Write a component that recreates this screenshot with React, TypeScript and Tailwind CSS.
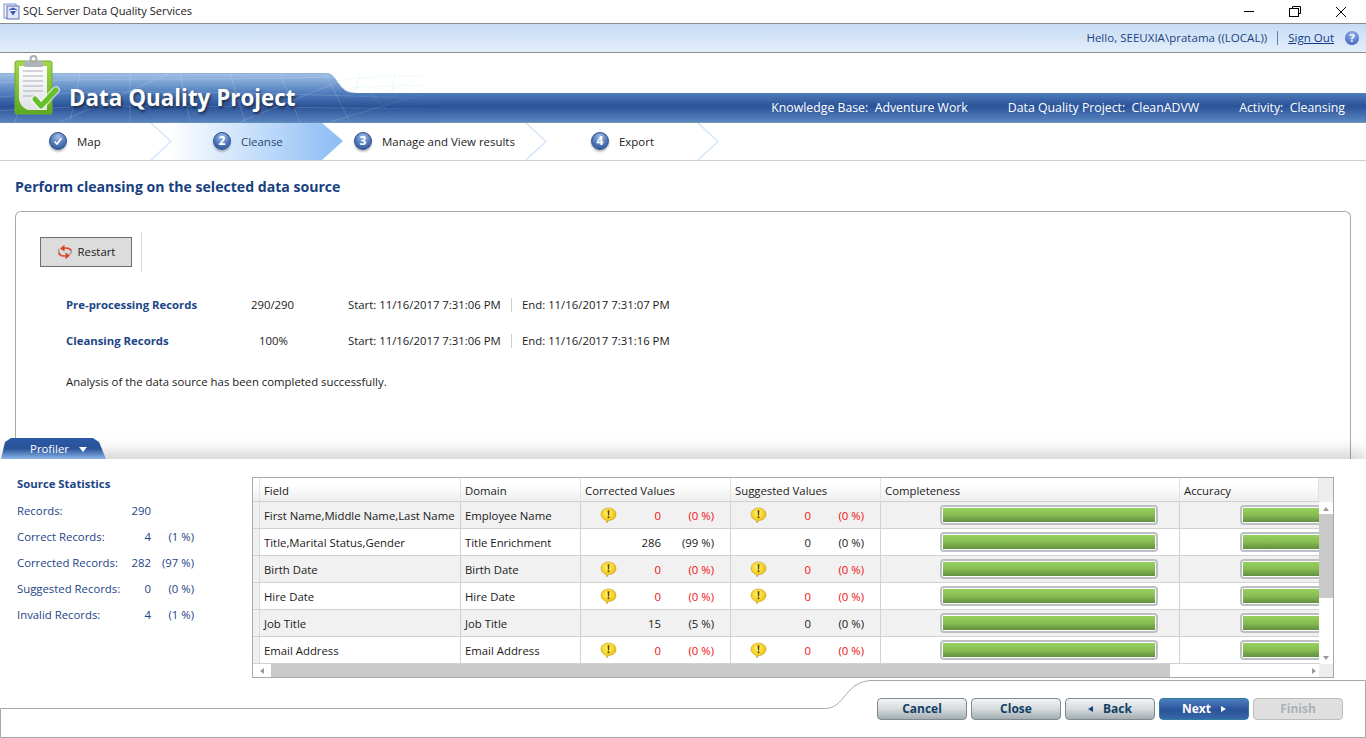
import React from "react";

const rows = [
  { f: "First Name,Middle Name,Last Name", d: "Employee Name", c: "0", cp: "(0 %)", cw: true, s: "0", sp: "(0 %)", sw: true },
  { f: "Title,Marital Status,Gender", d: "Title Enrichment", c: "286", cp: "(99 %)", cw: false, s: "0", sp: "(0 %)", sw: false },
  { f: "Birth Date", d: "Birth Date", c: "0", cp: "(0 %)", cw: true, s: "0", sp: "(0 %)", sw: true },
  { f: "Hire Date", d: "Hire Date", c: "0", cp: "(0 %)", cw: true, s: "0", sp: "(0 %)", sw: true },
  { f: "Job Title", d: "Job Title", c: "15", cp: "(5 %)", cw: false, s: "0", sp: "(0 %)", sw: false },
  { f: "Email Address", d: "Email Address", c: "0", cp: "(0 %)", cw: true, s: "0", sp: "(0 %)", sw: true },
];

const stats = [
  { l: "Records:", v: "290", p: "" },
  { l: "Correct Records:", v: "4", p: "(1 %)" },
  { l: "Corrected Records:", v: "282", p: "(97 %)" },
  { l: "Suggested Records:", v: "0", p: "(0 %)" },
  { l: "Invalid Records:", v: "4", p: "(1 %)" },
];

function Warn() {
  return (
    <svg width="17" height="18" viewBox="0 0 17 18" className="shrink-0">
      <defs>
        <radialGradient id="wg" cx="0.45" cy="0.35" r="0.7">
          <stop offset="0" stopColor="#fff27a" />
          <stop offset="0.6" stopColor="#f5cf1c" />
          <stop offset="1" stopColor="#c99a08" />
        </radialGradient>
      </defs>
      <path d="M8.5 1C12.9 1 16 3.8 16 7.3 16 10.8 12.9 13.5 8.5 13.5 L7 16 L6 13.2C3 12.4 1 10.2 1 7.3 1 3.8 4.1 1 8.5 1Z" fill="url(#wg)" stroke="#c8a030" strokeWidth="0.6" />
      <path d="M7.6 3.2h1.8l-.3 5.2h-1.2z" fill="#5a4500" />
      <circle cx="8.5" cy="10.3" r="1" fill="#5a4500" />
    </svg>
  );
}

function StepDot({ children }: { children: React.ReactNode }) {
  return (
    <span className="relative flex h-[18px] w-[18px] shrink-0 items-center justify-center rounded-full border border-[#2b4f8f] bg-[radial-gradient(circle_at_50%_25%,#a9c0e6_0%,#5a82c2_45%,#23488c_100%)] text-[12px] font-bold leading-none text-white shadow-[0_2px_2px_rgba(0,0,0,0.25)]">
      {children}
    </span>
  );
}

function Chevron({ className }: { className: string }) {
  return (
    <svg width="23" height="38" viewBox="0 0 23 38" className={className}>
      <path d="M1 0 L21 18.5 L1 37" fill="none" stroke="#cfe2f8" strokeWidth="1.2" />
    </svg>
  );
}

function Bar({ clipped }: { clipped?: boolean }) {
  return (
    <div className={`flex h-[20px] shrink-0 rounded-[4px] border-[2px] border-[#bcc0c5] bg-white p-[1px] ${clipped ? "w-[100px]" : "w-[218px]"}`}>
      <div className="h-full w-full bg-[linear-gradient(#95d15c,#88bc52_50%,#628f40)]" />
    </div>
  );
}

function Cell({ count, pct, warn }: { count: string; pct: string; warn: boolean }) {
  const color = warn ? "text-[#f01010]" : "text-[#1a1a1a]";
  return (
    <div className={`flex h-full items-center border-r border-[#d2d2d2] pt-[1px] ${color}`}>
      <div className="flex w-[80px] items-center justify-between pl-[19px]">
        {warn ? <span className="leading-none"><Warn /></span> : <span />}
        <span>{count}</span>
      </div>
      <div className="w-[53px] text-right">{pct}</div>
    </div>
  );
}

function FooterButton({ label, kind }: { label: React.ReactNode; kind: "normal" | "primary" | "disabled" }) {
  const k =
    kind === "primary"
      ? "border-[#2f7f9f] bg-[linear-gradient(#4d7fc0,#2a5298_55%,#3a68aa)] text-white"
      : kind === "disabled"
      ? "border-[#bdbdbd] bg-[#dfdfdf] text-[#a9b2ba]"
      : "border-[#7f8a8f] bg-[linear-gradient(#f2f4f5,#d5dadc_50%,#a3adb1)] text-[#123f66]";
  return (
    <div className={`flex h-[22px] w-[90px] items-center justify-center gap-[10px] rounded-[4px] border text-[12px] font-bold ${k}`}>
      {label}
    </div>
  );
}

export default function App() {
  return (
    <div className="relative flex h-[738px] w-[1366px] flex-col overflow-hidden bg-white font-['Open_Sans','Liberation_Sans',sans-serif] text-[11.35px] text-[#1a1a1a]">
      {/* Title bar */}
      <div className="flex h-[24px] shrink-0 items-center border-b border-[#8c8c8c] bg-white pl-[3px]">
        <svg width="17" height="17" viewBox="0 0 17 17" className="mr-[3px]">
          <rect x="1" y="1" width="12" height="14" fill="#eef2fb" stroke="#7a8fd8" />
          <rect x="4" y="3" width="12" height="13" fill="#dfe6f6" stroke="#5a6fb0" />
          <path d="M6 6.5l4-2 4 2-4 6z" fill="#3a56b8" />
          <path d="M7 7.5h6" stroke="#fff" />
        </svg>
        <span className="text-[11.15px]">SQL Server Data Quality Services</span>
        <div className="ml-auto flex items-center pr-[19px] text-black">
          <svg width="12" height="12" viewBox="0 0 12 12" className="mr-[34px]"><path d="M1 5.5h10" stroke="#000" /></svg>
          <svg width="12" height="12" viewBox="0 0 12 12" className="mr-[34px]">
            <path d="M3.5 2.5V.5h8v7h-2" fill="none" stroke="#000" />
            <rect x=".5" y="2.5" width="9" height="8" fill="#fff" stroke="#000" />
          </svg>
          <svg width="12" height="12" viewBox="0 0 12 12"><path d="M1 1l10 10M11 1L1 11" stroke="#000" /></svg>
        </div>
      </div>

      {/* User bar */}
      <div className="flex h-[29px] shrink-0 items-center justify-end border-b border-[#8c8c8c] bg-[linear-gradient(#c6dcf5,#e3eefb)] pr-[6px] text-[11.55px] text-[#22437f]">
        <span>Hello, SEEUXIA\pratama ((LOCAL))</span>
        <span className="mx-[10px] h-[14px] w-px bg-[#5f7fae]" />
        <span className="text-[#103a88] underline">Sign Out</span>
        <svg width="16" height="16" viewBox="0 0 16 16" className="ml-[10px]">
          <defs>
            <radialGradient id="hg" cx="0.5" cy="0.3" r="0.8">
              <stop offset="0" stopColor="#9db8ee" />
              <stop offset="1" stopColor="#2d55b5" />
            </radialGradient>
          </defs>
          <circle cx="8" cy="8" r="7.5" fill="url(#hg)" stroke="#dfe8f8" />
          <text x="8" y="12" textAnchor="middle" fontSize="11" fontWeight="700" fill="#fff" fontFamily="Open Sans">?</text>
        </svg>
      </div>

      {/* Banner */}
      <div className="relative h-[70px] shrink-0 bg-white">
        <div className="absolute bottom-0 left-0 right-0 flex h-[30px] items-center justify-end gap-[40px] border-b border-[#6f9aa8] bg-[linear-gradient(#4f7dbd,#2a5298_45%,#5a86c0)] pr-[21px] pt-[1px] text-[12.3px] text-white">
          <span>Knowledge Base:&nbsp; Adventure Work</span>
          <span>Data Quality Project:&nbsp; CleanADVW</span>
          <span>Activity:&nbsp; Cleansing</span>
        </div>
        <svg width="440" height="50" viewBox="0 0 440 50" className="absolute left-0 top-[20px]">
          <defs>
            <linearGradient id="tb" gradientUnits="userSpaceOnUse" x1="0" y1="0" x2="0" y2="50">
              <stop offset="0" stopColor="#a3c2e8" />
              <stop offset="0.4" stopColor="#4f7dbd" />
              <stop offset="0.67" stopColor="#2a5298" />
              <stop offset="1" stopColor="#5a86c0" />
            </linearGradient>
            <linearGradient id="fade" gradientUnits="userSpaceOnUse" x1="0" y1="0" x2="440" y2="0">
              <stop offset="0.75" stopColor="#ffffff" stopOpacity="0.22" />
              <stop offset="1" stopColor="#ffffff" stopOpacity="0" />
            </linearGradient>
          </defs>
          <g stroke="#d9f2f5" strokeOpacity="0.6" fill="none" strokeWidth="0.7">
            <path d="M335 8C370 2 400 4 425 3M340 16C370 12 400 14 425 12" />
            <path d="M360 0L355 20M395 0L392 20M345 20L385 0M385 20L420 4" />
          </g>
          <path d="M0 49.5V0H326C338 0 337 20 355 20H440V49.5Z" fill="url(#tb)" />
          <path d="M0 0.4H326C338 0.4 337 20 355 20" fill="none" stroke="#7da8b8" strokeWidth="0.6" />
          <g stroke="url(#fade)" fill="none" strokeWidth="0.7">
            <path d="M0 10C80 4 200 8 330 4M0 24C90 16 220 18 440 26M0 38C90 30 220 34 440 36" />
            <path d="M30 0L15 49M80 0L70 49M130 0L130 49M180 0L190 49M230 0L245 49M280 0L300 49M325 0L350 49M370 20L400 49M415 20L430 49" />
            <path d="M240 49L340 8M330 49L420 22M60 49L170 0" />
          </g>
        </svg>
        <svg width="52" height="62" viewBox="0 0 52 62" className="absolute left-[12px] top-[2px]">
          <defs>
            <linearGradient id="pg" x1="0" y1="0" x2="0" y2="1">
              <stop offset="0" stopColor="#ffffff" />
              <stop offset="1" stopColor="#dfe2e6" />
            </linearGradient>
            <linearGradient id="bg" x1="0" y1="0" x2="0" y2="1">
              <stop offset="0" stopColor="#a5d84a" />
              <stop offset="1" stopColor="#5ca81c" />
            </linearGradient>
          </defs>
          <rect x="3" y="6" width="37" height="53" rx="2" fill="url(#bg)" stroke="#6fae28" />
          <path d="M7 11H35V55H16C11 53 8 50 7 44Z" fill="url(#pg)" />
          <path d="M11 16H31M11 21H31M11 26H31M11 31H31M11 36H31M11 41H24" stroke="#a9aeb6" strokeWidth="1.2" />
          <rect x="12" y="6" width="19" height="6" rx="1.5" fill="#b0b4b9" />
          <circle cx="21.5" cy="4" r="3" fill="none" stroke="#a8adb3" strokeWidth="2" />
          <path d="M23 44l6 7 15-16" fill="none" stroke="#ffffff" strokeOpacity="0.6" strokeWidth="8" strokeLinecap="round" strokeLinejoin="round" />
          <path d="M23 44l6 7 15-16" fill="none" stroke="#66c02a" strokeWidth="5" strokeLinecap="round" strokeLinejoin="round" />
        </svg>
        <div className="absolute left-[69px] top-[29px] text-[22.4px] font-bold leading-[32px] text-white [text-shadow:1px_2px_3px_rgba(0,0,0,0.6)]">
          Data Quality Project
        </div>
      </div>

      {/* Wizard */}
      <div className="relative flex h-[38px] shrink-0 border-b border-[#cfcfcf] bg-white text-[11.45px] text-[#222]">
        <div className="absolute left-[150px] top-0 h-[37px] w-[194px] bg-[linear-gradient(90deg,#ffffff_10%,#8abcf5_100%)] [clip-path:polygon(0_0,172px_0,193px_18px,172px_37px,0_37px,21px_18px)]" />
        <Chevron className="absolute left-[150px] top-0" />
        <Chevron className="absolute left-[525px] top-0" />
        <Chevron className="absolute left-[697px] top-0" />
        <div className="absolute left-[49px] top-[9px] flex items-center gap-[10px]">
          <StepDot>
            <svg width="10" height="10" viewBox="0 0 10 10"><path d="M1.5 5.5l2.5 2.5 4.5-6" fill="none" stroke="#fff" strokeWidth="1.6" /></svg>
          </StepDot>
          <span className="pt-[1px]">Map</span>
        </div>
        <div className="absolute left-[213px] top-[9px] flex items-center gap-[10px]">
          <StepDot>2</StepDot>
          <span className="pt-[1px] text-[#28486e]">Cleanse</span>
        </div>
        <div className="absolute left-[354px] top-[9px] flex items-center gap-[10px]">
          <StepDot>3</StepDot>
          <span className="pt-[1px]">Manage and View results</span>
        </div>
        <div className="absolute left-[591px] top-[9px] flex items-center gap-[10px]">
          <StepDot>4</StepDot>
          <span className="pt-[1px]">Export</span>
        </div>
      </div>

      {/* Heading */}
      <div className="flex h-[50px] shrink-0 items-center pl-[15px] pt-[1px] text-[14.1px] font-bold text-[#17407f]">
        Perform cleansing on the selected data source
      </div>

      {/* Main panel */}
      <div className="relative mx-[15px] h-[248px] shrink-0 rounded-t-[6px] border border-b-0 border-[#a8a8a8] pl-[24px] pt-[20px]">
        <div className="flex items-center">
          <div className="flex h-[30px] w-[92px] items-center justify-center gap-[5px] border-[1.5px] border-[#6e6e6e] bg-[#dcdcdc] text-[#1a1a1a]">
            <svg width="16" height="16" viewBox="0 0 16 16">
              <path d="M14.5 7C13 4 10 3.6 6.5 4.2" fill="none" stroke="#e2492a" strokeWidth="1.6" />
              <path d="M7.5 0.8L3 4.5 7.5 7.5z" fill="#d8432a" />
              <path d="M2 5C1.2 7 2 9 3.5 10" fill="none" stroke="#9a9a94" strokeWidth="1.4" />
              <path d="M1.5 9C3 12 6 12.4 9.5 11.8" fill="none" stroke="#e2492a" strokeWidth="1.6" />
              <path d="M8.5 8.5L13 11.6 8.5 15.2z" fill="#d8432a" />
              <path d="M14 6C14.8 8 14 9.5 12.5 10.5" fill="none" stroke="#9a9a94" strokeWidth="1.2" />
            </svg>
            Restart
          </div>
          <span className="ml-[9px] h-[40px] w-px bg-[#dcdcdc]" />
        </div>

        <div className="mt-[15px] flex h-[36px] items-center pl-[26px]">
          <span className="w-[182px] font-bold text-[#1c4587]">Pre-processing Records</span>
          <span className="w-[100px] pl-[3px]">290/290</span>
          <span className="w-[163px]">Start: 11/16/2017 7:31:06 PM</span>
          <span className="mr-[10px] h-[14px] w-px bg-[#cfcfcf]" />
          <span>End: 11/16/2017 7:31:07 PM</span>
        </div>
        <div className="flex h-[36px] items-center pl-[26px]">
          <span className="w-[182px] font-bold text-[#1c4587]">Cleansing Records</span>
          <span className="w-[100px] pl-[11px]">100%</span>
          <span className="w-[163px]">Start: 11/16/2017 7:31:06 PM</span>
          <span className="mr-[10px] h-[14px] w-px bg-[#cfcfcf]" />
          <span>End: 11/16/2017 7:31:16 PM</span>
        </div>
        <div className="mt-[14px] pl-[26px]">Analysis of the data source has been completed successfully.</div>
      </div>

      {/* Profiler */}
      <div className="relative flex h-[221px] shrink-0 bg-white shadow-[0_-8px_14px_rgba(0,0,0,0.16)]">
        <div className="absolute -top-[21px] left-[1px] flex h-[21px] w-[105px] items-center justify-center gap-[10px] bg-[linear-gradient(#2c5aa6,#2a5298_50%,#8ab6ea)] pl-[10px] pt-[1px] text-white [clip-path:polygon(0_100%,4px_4px,10px_0,92px_0,98px_4px,105px_100%)]">
          <span>Profiler</span>
          <span className="mt-px h-0 w-0 border-x-[4px] border-t-[5px] border-x-transparent border-t-white" />
        </div>

        <div className="w-[252px] shrink-0 pl-[17px] pt-[16px] text-[#1c4587]">
          <div className="mb-[5px] font-bold leading-[18px]">Source Statistics</div>
          {stats.map((s) => (
            <div key={s.l} className="flex h-[26px] items-center">
              <span className="w-[110px]">{s.l}</span>
              <span className="w-[24px] text-right">{s.v}</span>
              <span className="w-[43px] text-right">{s.p}</span>
            </div>
          ))}
        </div>

        <div className="mt-[18px] flex h-[201px] w-[1082px] shrink-0 border border-[#a9a9a9] bg-white">
          <div className="flex w-[1066px] shrink-0 flex-col overflow-hidden">
            <div className="grid h-[24px] shrink-0 grid-cols-[7px_201px_120px_150px_150px_299px_139px] border-b border-[#d2d2d2] bg-[linear-gradient(#ffffff_30%,#eeeeee)]">
              <div className="border-r border-[#e4e4e4]" />
              {["Field", "Domain", "Corrected Values", "Suggested Values", "Completeness", "Accuracy"].map((h) => (
                <div key={h} className="flex items-center border-r border-[#e2e2e2] pl-[4px] pt-[3px]">{h}</div>
              ))}
            </div>
            {rows.map((r, i) => (
              <div key={r.f} className={`grid h-[27px] shrink-0 grid-cols-[7px_201px_120px_150px_150px_299px_139px] border-b border-[#d2d2d2] ${i % 2 === 0 ? "bg-[#f1f1f1]" : "bg-white"}`}>
                <div className="border-r border-[#dcdcdc] bg-[#f0f0f0]" />
                <div className="flex items-center overflow-hidden whitespace-nowrap border-r border-[#d2d2d2] pl-[4px] pt-[1px]">{r.f}</div>
                <div className="flex items-center whitespace-nowrap border-r border-[#d2d2d2] pl-[4px] pt-[1px]">{r.d}</div>
                <Cell count={r.c} pct={r.cp} warn={r.cw} />
                <Cell count={r.s} pct={r.sp} warn={r.sw} />
                <div className="flex items-center border-r border-[#d2d2d2] pl-[59px]"><Bar /></div>
                <div className="flex items-center overflow-hidden pl-[60px]"><Bar clipped /></div>
              </div>
            ))}
            <div className="flex h-[13px] shrink-0 items-center bg-white pl-[7px] pr-[3px]">
              <span className="h-0 w-0 border-y-[3px] border-r-[4px] border-y-transparent border-r-[#9a9a9a]" />
              <div className="ml-[7px] h-full w-[899px] bg-[#c9c9c9]" />
              <span className="ml-auto h-0 w-0 border-y-[3px] border-l-[4px] border-y-transparent border-l-[#9a9a9a]" />
            </div>
          </div>
          <div className="flex w-[14px] shrink-0 flex-col bg-[#eeeeee]">
            <div className="h-[24px] shrink-0" />
            <div className="flex h-[162px] flex-col items-center rounded-[2px] bg-white">
              <span className="mt-[5px] h-0 w-0 border-x-[3px] border-b-[4px] border-x-transparent border-b-[#9a9a9a]" />
              <div className="mt-[3px] h-[84px] w-full bg-[#c9c9c9]" />
              <span className="mb-[4px] mt-auto h-0 w-0 border-x-[3px] border-t-[4px] border-x-transparent border-t-[#9a9a9a]" />
            </div>
          </div>
        </div>
      </div>

      {/* Footer */}
      <div className="relative flex h-[58px] shrink-0 justify-end gap-[4px] bg-white pr-[23px] pt-[18px]">
        <svg width="1366" height="58" viewBox="0 0 1366 58" className="absolute left-0 top-0">
          <path d="M0.5 57.5V28.5H825C845 28.5 845 1 872 0.5H1365.5V57.5Z" fill="none" stroke="#a8a8a8" />
        </svg>
        <div className="relative flex gap-[4px]">
          <FooterButton kind="normal" label="Cancel" />
          <FooterButton kind="normal" label="Close" />
          <FooterButton
            kind="normal"
            label={
              <>
                <span className="h-0 w-0 border-y-[3px] border-r-[5px] border-y-transparent border-r-[#1d3f86]" />
                Back
              </>
            }
          />
          <FooterButton
            kind="primary"
            label={
              <>
                Next
                <span className="h-0 w-0 border-y-[3px] border-l-[5px] border-y-transparent border-l-white" />
              </>
            }
          />
          <FooterButton kind="disabled" label="Finish" />
        </div>
      </div>
    </div>
  );
}
